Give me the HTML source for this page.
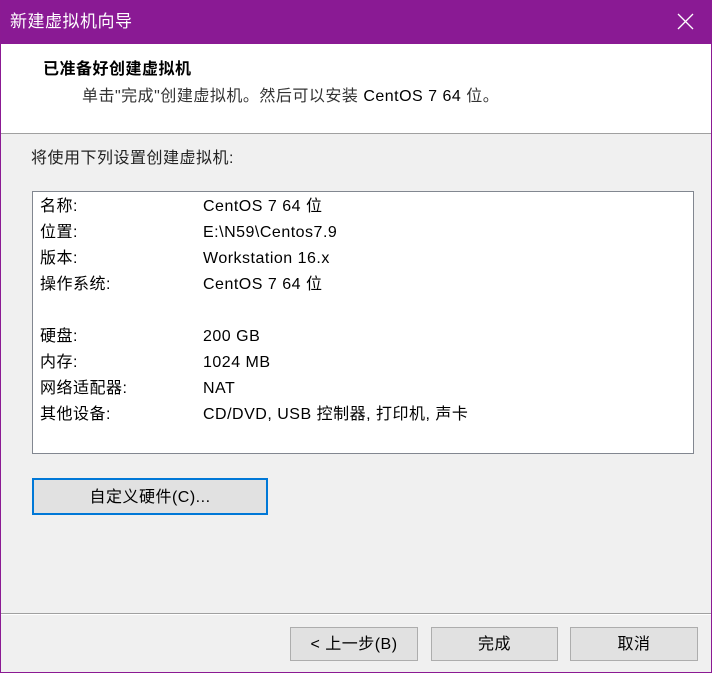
<!DOCTYPE html>
<html><head><meta charset="utf-8"><style>
*{margin:0;padding:0;box-sizing:border-box}
body{width:712px;height:673px;overflow:hidden;font-family:"Liberation Sans","Noto Sans CJK SC",sans-serif;font-size:16px;color:#000;background:#f0f0f0;position:relative;letter-spacing:0.5px}
.frame{position:absolute;left:0;top:0;width:712px;height:673px;border:1px solid #8b1a93;border-top:none}
.title{position:absolute;left:0;top:0;width:712px;height:44px;background:#8a1a94;color:#fff;font-size:17px;line-height:44px;padding-left:10px}
.close{position:absolute;right:18px;top:13px;width:17px;height:17px}
.head{position:absolute;left:1px;top:44px;width:710px;height:90px;background:#fff;border-bottom:1px solid #a0a0a0}
.t{position:absolute;white-space:nowrap;line-height:20px}
.list{position:absolute;left:32px;top:191px;width:662px;height:263px;background:#fff;border:1px solid #828790}
.btn{position:absolute;background:#e1e1e1;border:1px solid #adadad;text-align:center;font-size:16px}
.sep{position:absolute;left:1px;top:613px;width:710px;height:2px;border-top:1px solid #a0a0a0;border-bottom:1px solid #fff}
</style></head><body>
<div class="title">新建虚拟机向导</div>
<svg class="close" viewBox="0 0 17 17"><path d="M1 1L16 16M16 1L1 16" stroke="#fff" stroke-width="1.3"/></svg>
<div class="head">
<div class="t" style="left:42px;top:16px;font-weight:bold">已准备好创建虚拟机</div>
<div class="t" style="left:81px;top:43px;color:#333">单击"完成"创建虚拟机。然后可以安装 <span style="color:#000">CentOS 7 64</span> 位。</div>
</div>
<div class="t" style="left:31px;top:149px;color:#222">将使用下列设置创建虚拟机:</div>
<div class="list">
<div class="t" style="left:7px;top:5px">名称:</div><div class="t" style="left:170px;top:5px">CentOS 7 64 位</div>
<div class="t" style="left:7px;top:31px">位置:</div><div class="t" style="left:170px;top:31px">E:\N59\Centos7.9</div>
<div class="t" style="left:7px;top:57px">版本:</div><div class="t" style="left:170px;top:57px">Workstation 16.x</div>
<div class="t" style="left:7px;top:83px">操作系统:</div><div class="t" style="left:170px;top:83px">CentOS 7 64 位</div>
<div class="t" style="left:7px;top:135px">硬盘:</div><div class="t" style="left:170px;top:135px">200 GB</div>
<div class="t" style="left:7px;top:161px">内存:</div><div class="t" style="left:170px;top:161px">1024 MB</div>
<div class="t" style="left:7px;top:187px">网络适配器:</div><div class="t" style="left:170px;top:187px">NAT</div>
<div class="t" style="left:7px;top:213px">其他设备:</div><div class="t" style="left:170px;top:213px">CD/DVD, USB 控制器, 打印机, 声卡</div>
</div>
<div class="btn" style="left:32px;top:478px;width:236px;height:37px;border:2px solid #0078d7;line-height:35px">自定义硬件(C)...</div>
<div class="sep"></div>
<div class="btn" style="left:290px;top:627px;width:128px;height:34px;line-height:33px">&lt; 上一步(B)</div>
<div class="btn" style="left:431px;top:627px;width:127px;height:34px;line-height:33px">完成</div>
<div class="btn" style="left:570px;top:627px;width:128px;height:34px;line-height:33px">取消</div>
<div class="frame"></div>
</body></html>
